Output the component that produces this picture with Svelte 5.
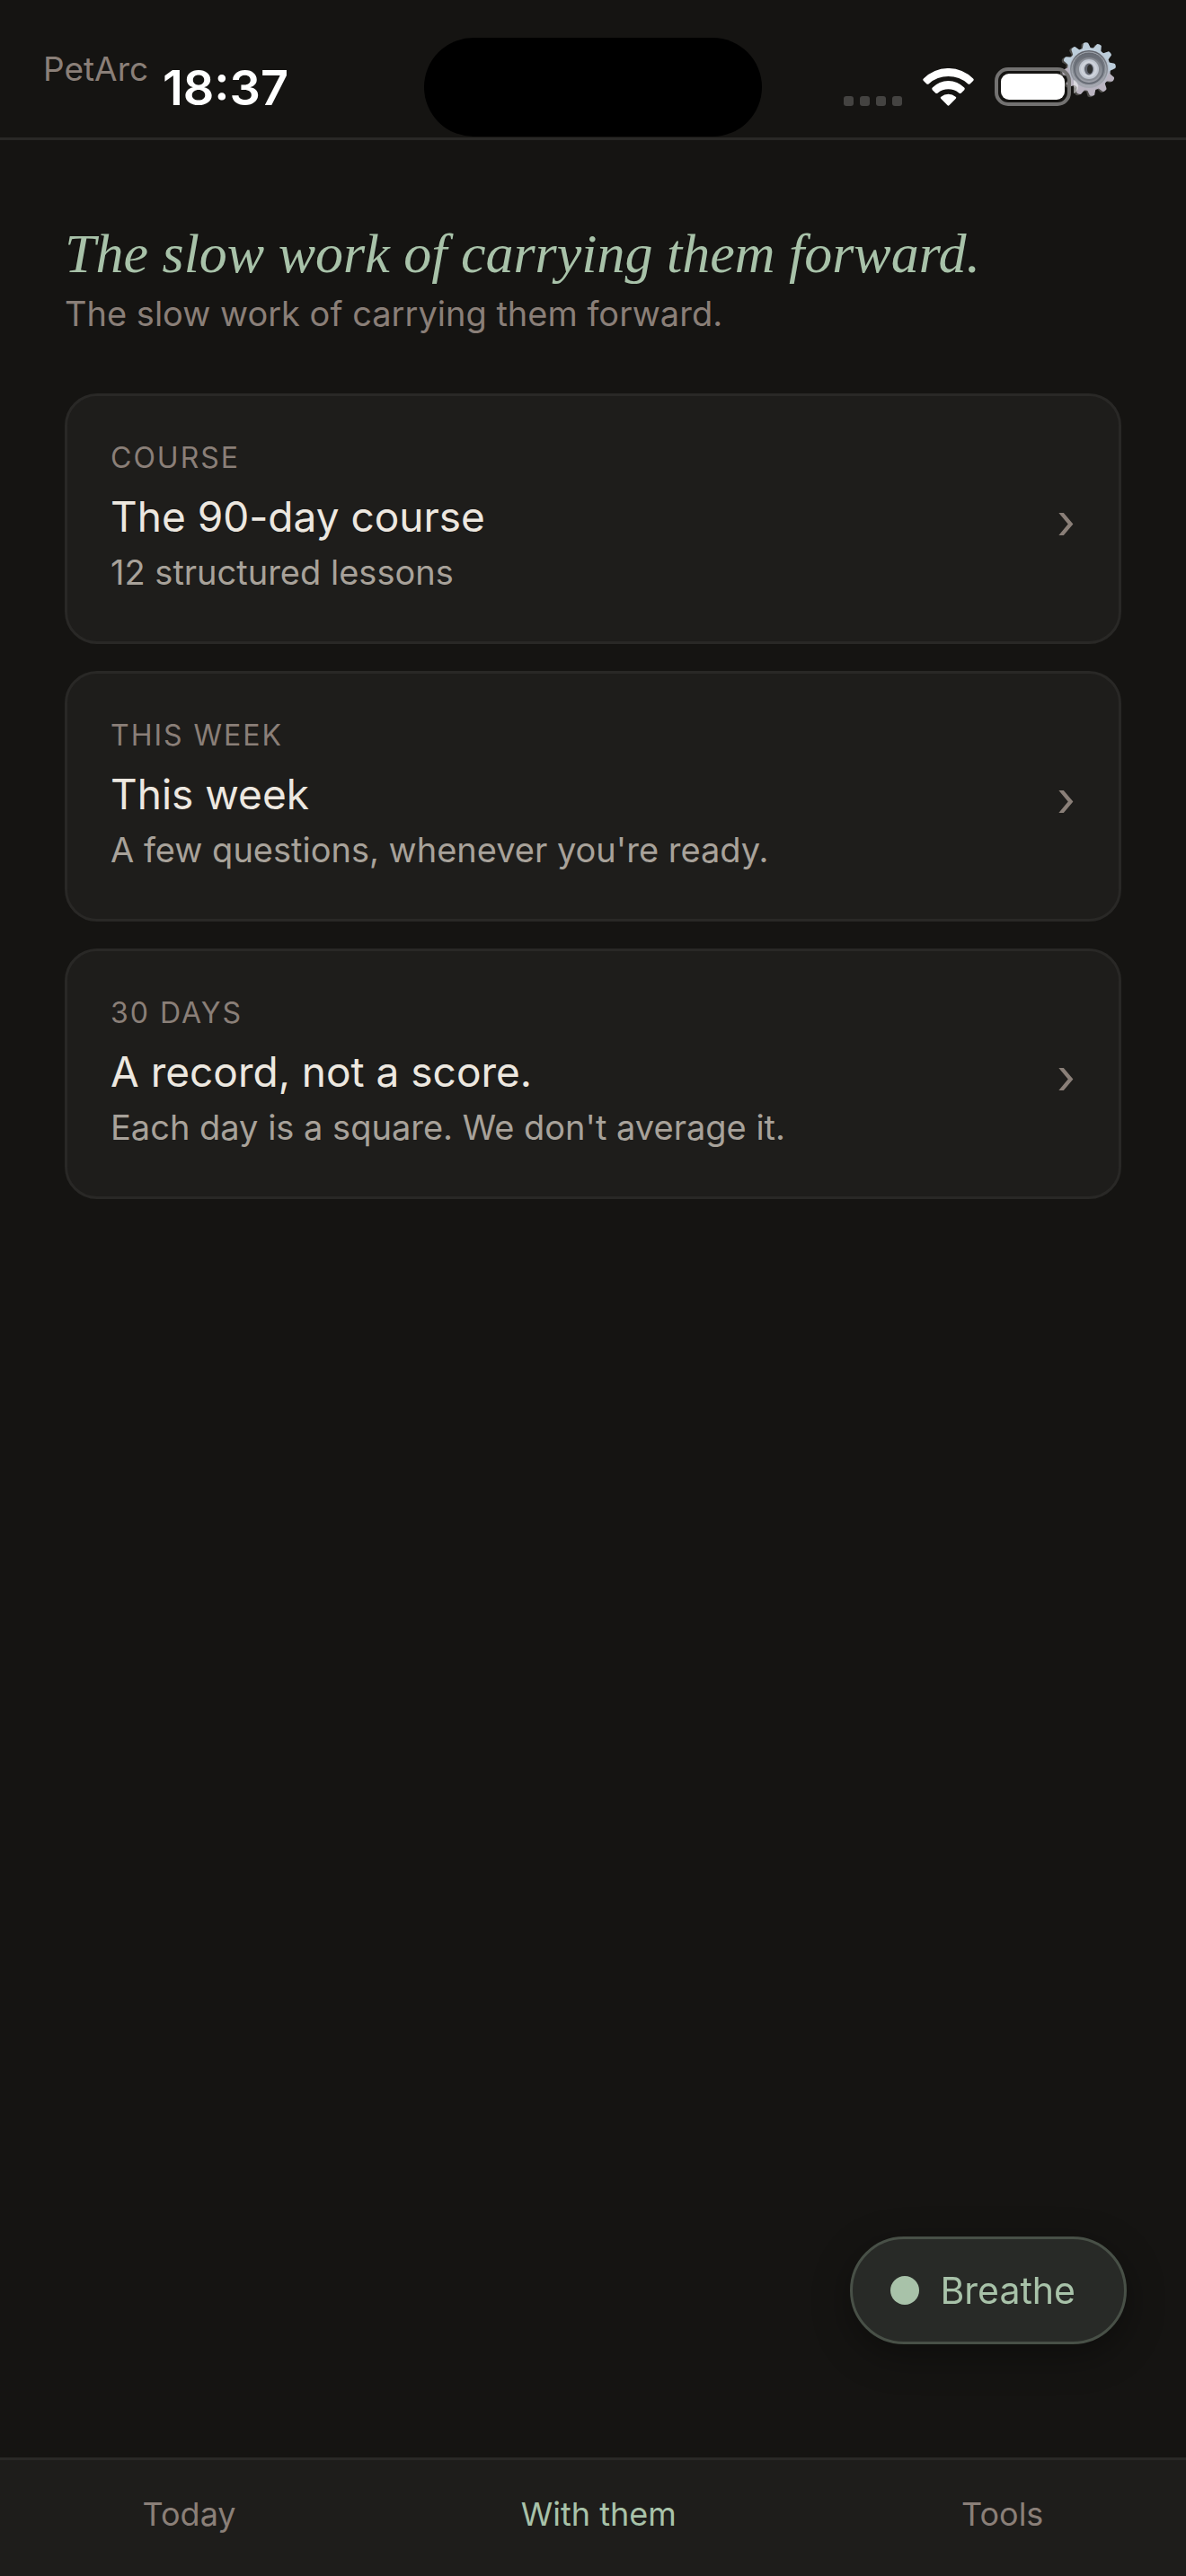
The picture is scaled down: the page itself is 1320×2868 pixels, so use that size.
<script lang="ts">
	type Entry = { label: string; title: string; detail: string };

	const entries: Entry[] = [
		{ label: 'Course', title: 'The 90-day course', detail: '12 structured lessons' },
		{ label: 'This week', title: 'This week', detail: "A few questions, whenever you're ready." },
		{ label: '30 days', title: 'A record, not a score.', detail: "Each day is a square. We don't average it." }
	];

	const tabs = ['Today', 'With them', 'Tools'];
	const teeth = Array.from({ length: 12 }, (_, i) => i * 30 - 7);

	let current = $state('With them');
</script>

<div class="app">
	<header class="topbar">
		<span class="brand">PetArc</span>
		<button class="settings" type="button" aria-label="Settings">
			<svg viewBox="-32 -32 64 64" width="64" height="64" aria-hidden="true">
				<defs>
					<linearGradient id="gear-face" x1="0" y1="-30" x2="0" y2="30" gradientUnits="userSpaceOnUse">
						<stop offset="0" stop-color="#c3d5e2"></stop>
						<stop offset="0.5" stop-color="#b4bcc8"></stop>
						<stop offset="1" stop-color="#b9b0bd"></stop>
					</linearGradient>
					<linearGradient id="gear-dish" x1="0" y1="-21" x2="0" y2="21" gradientUnits="userSpaceOnUse">
						<stop offset="0" stop-color="#5d6068"></stop>
						<stop offset="0.5" stop-color="#858a92"></stop>
						<stop offset="1" stop-color="#a8a9b2"></stop>
					</linearGradient>
				</defs>
				<g fill="#4b4a47" transform="translate(-2 1)">
					<circle r="24"></circle>
					{#each teeth as angle}
						<path d="M-4-22-3-29Q0-32 3-29L4-22z" transform="rotate({angle})"></path>
					{/each}
				</g>
				<circle r="24" fill="url(#gear-face)"></circle>
				{#each teeth as angle}
					<path
						d="M-5-22-3-28Q-3-30 0-30 3-30 3-28L5-22z"
						fill={Math.cos((angle * Math.PI) / 180) > 0 ? '#bccdda' : '#bab4c0'}
						transform="rotate({angle})"
					></path>
				{/each}
				<circle r="21" fill="url(#gear-dish)"></circle>
				<circle r="19" fill="none" stroke="#a5abb3"></circle>
				<circle r="16" fill="none" stroke="#696e77" stroke-width="2"></circle>
				<circle r="13" fill="#888c94"></circle>
				<circle r="11" fill="#c0c6d0"></circle>
				<circle r="8" fill="none" stroke="#d0d4dc" stroke-width="2"></circle>
				<ellipse rx="5" ry="6.500" fill="#626670"></ellipse>
				<ellipse cx="1" rx="3" ry="5" fill="#2c2d2d"></ellipse>
			</svg>
		</button>

		<div class="status">
			<div class="status__side status__side--left">18:37</div>
			<div class="island"></div>
			<div class="status__side status__side--right">
				<div class="signal"><i></i><i></i><i></i><i></i></div>
				<svg viewBox="375 165 171 127" width="57" height="42" fill="#fff" aria-hidden="true">
					<path d="M377 200A117 117 0 0 1 544 200Q548 204 544 207L534 217Q530 221 526 217A98 98 0 0 0 395 217Q391 221 387 217L377 207Q373 204 377 200z"></path>
					<path d="M407 230A74 74 0 0 1 514 230Q518 234 514 238L504 248Q500 252 496 248A56 56 0 0 0 425 248Q421 252 417 248L407 238Q403 234 407 230z"></path>
					<path d="M436 261A38 38 0 0 1 485 261Q489 264 485 268L464 289Q460 293 457 289L436 268Q432 264 436 261z"></path>
				</svg>
				<svg viewBox="0 0 93 43" width="93" height="43" aria-hidden="true">
					<rect x="2" y="2" width="81" height="39" rx="13" fill="none" stroke="#737271" stroke-width="4"></rect>
					<rect x="7" y="7" width="71" height="29" rx="9" fill="#fff"></rect>
					<path d="M88 14c3 1 5 4 5 7.500s-2 6.500-5 7.500z" fill="#fff" fill-opacity="0.5"></path>
				</svg>
			</div>
		</div>
	</header>

	<main>
		<h1>The slow work of carrying them forward.</h1>
		<p class="intro">The slow work of carrying them forward.</p>

		<div class="cards">
			{#each entries as entry}
				<button class="card" type="button">
					<span class="card__text">
						<span class="card__label">{entry.label}</span>
						<span class="card__title">{entry.title}</span>
						<span class="card__detail">{entry.detail}</span>
					</span>
					<span class="card__chevron" aria-hidden="true">›</span>
				</button>
			{/each}
		</div>
	</main>

	<nav class="tabs" aria-label="Sections">
		{#each tabs as tab}
			<button class="tab" class:is-current={current === tab} type="button" onclick={() => (current = tab)}>
				{tab}
			</button>
		{/each}
	</nav>

	<button class="breathe" type="button">
		<span class="breathe__dot"></span>
		Breathe
	</button>
</div>

<style>
	:global(body) {
		background: #151412;
	}

	.app {
		display: flex;
		flex-direction: column;
		min-height: 100vh;
		background: #151412;
		color: #ede8e0;
		font-family: Inter, 'Liberation Sans', sans-serif;
	}

	button {
		margin: 0;
		padding: 0;
		border: 0;
		background: none;
		color: inherit;
		font: inherit;
		cursor: pointer;
	}

	.topbar {
		position: relative;
		display: flex;
		align-items: center;
		justify-content: space-between;
		height: 153px;
		padding: 0 48px;
		border-bottom: 3px solid #292826;
	}

	.brand {
		color: #8a7f78;
		font-size: 37px;
		line-height: 45px;
	}

	.settings {
		display: flex;
		align-items: center;
		justify-content: center;
		width: 120px;
		height: 120px;
	}

	.status {
		position: absolute;
		inset: 42px 0 0;
		display: flex;
		align-items: flex-start;
		pointer-events: none;
	}

	.status__side {
		display: flex;
		flex: 1;
		align-items: flex-end;
		justify-content: center;
		height: 76px;
		color: #fff;
		font-size: 54px;
		font-weight: 600;
		line-height: 40px;
	}

	.status__side--left {
		padding-left: 30px;
	}

	.status__side--right {
		gap: 23px;
		padding-right: 30px;
	}

	.island {
		width: 376px;
		height: 110px;
		border-radius: 55px;
		background: #000;
	}

	.signal {
		display: flex;
		gap: 7px;
	}

	.signal i {
		width: 11px;
		height: 11px;
		border-radius: 3px;
		background: #444341;
	}

	main {
		flex: 1;
		padding: 84px 72px 48px;
	}

	h1 {
		margin: 0;
		color: #a8c2a9;
		font-family: 'Liberation Serif', serif;
		font-size: 62px;
		font-style: italic;
		font-weight: 400;
		line-height: 84px;
	}

	.intro {
		margin: 0 0 63px;
		color: #8a7f78;
		font-size: 38px;
		line-height: 51px;
	}

	.cards {
		display: flex;
		flex-direction: column;
		gap: 30px;
	}

	.card {
		display: flex;
		align-items: center;
		justify-content: space-between;
		padding: 48px;
		border: 3px solid #292826;
		border-radius: 36px;
		background: #1e1d1b;
		text-align: left;
	}

	.card__text {
		display: flex;
		flex-direction: column;
	}

	.card__label {
		margin-bottom: 11px;
		color: #8a7f78;
		font-size: 32px;
		letter-spacing: 2px;
		line-height: 42px;
		text-transform: uppercase;
	}

	.card__title {
		font-size: 46px;
		line-height: 66px;
	}

	.card__detail {
		color: #a8a29a;
		font-size: 38px;
		line-height: 58px;
	}

	.card__chevron {
		padding-top: 6px;
		color: #8a7f78;
		font-size: 54px;
		line-height: 66px;
	}

	.tabs {
		display: flex;
		justify-content: space-around;
		padding: 38px 0 46px;
		border-top: 3px solid #292826;
		background: #1e1d1b;
	}

	.tab {
		color: #8a7f78;
		font-size: 36px;
		line-height: 45px;
	}

	.tab.is-current {
		color: #a8c2a9;
	}

	.breathe {
		position: fixed;
		right: 66px;
		bottom: 258px;
		display: flex;
		align-items: center;
		gap: 24px;
		padding: 33px 54px 33px 42px;
		border: 3px solid #485047;
		border-radius: 60px;
		background: #282a27;
		box-shadow: 0 12px 42px rgb(0 0 0 / 35%);
		color: #a8c2a9;
		font-size: 41px;
		line-height: 48px;
	}

	.breathe__dot {
		width: 32px;
		height: 32px;
		border-radius: 50%;
		background: #a8c2a9;
	}
</style>
